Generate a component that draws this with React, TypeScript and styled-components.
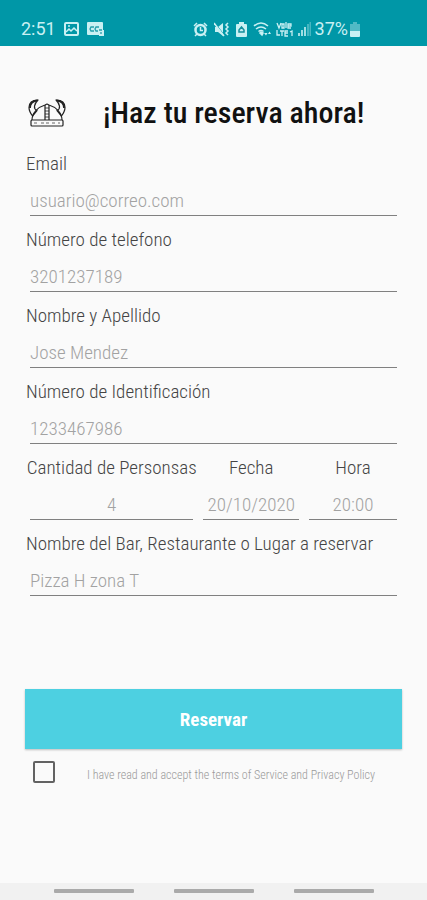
import React from "react";
import styled, { createGlobalStyle } from "styled-components";

const GlobalStyle = createGlobalStyle`
  *, *::before, *::after { box-sizing: border-box; }
  body {
    margin: 0;
    background: #fafafa;
    color: #444;
    font-family: "Roboto Condensed", Roboto, sans-serif;
  }
  input, button { font-family: inherit; }
`;

const Screen = styled.div`
  display: flex;
  flex-direction: column;
  min-height: 100vh;
  background: #fafafa;
`;

const StatusBar = styled.header`
  display: flex;
  justify-content: space-between;
  height: 46px;
  padding: 12px 67px 0 21px;
  background: #0097a7;
  color: #c9f0f3;
  font: 400 18px/34px Roboto, sans-serif;
`;

const StatusGroup = styled.div<{ $gap: number }>`
  display: flex;
  align-items: center;
  gap: ${(p) => p.$gap}px;
  height: 34px;
  svg { display: block; flex: none; }
`;

const Content = styled.main`
  display: flex;
  flex: 1;
  flex-direction: column;
  padding: 0 25px;
`;

const TitleRow = styled.div`
  display: flex;
  align-items: center;
  gap: 37px;
  height: 106px;
  padding: 28px 3px 0;
`;

const Title = styled.h1`
  margin: 0;
  color: #111;
  font-size: 30px;
  font-weight: 500;
  line-height: 36px;
  white-space: nowrap;
`;

const Form = styled.form`
  display: flex;
  flex-direction: column;
`;

const Fields = styled.div`
  display: flex;
  flex-direction: column;
  gap: 12px;
  margin-bottom: 93px;
`;

const FieldRow = styled.div`
  display: grid;
  grid-template-columns: 46fr 28fr 26fr;
`;

const FieldBox = styled.div<{ $centered?: boolean }>`
  display: flex;
  flex-direction: column;
  min-width: 0;
  text-align: ${(p) => (p.$centered ? "center" : "left")};
`;

const Label = styled.label`
  padding: 0 1px;
  font-size: 19px;
  font-weight: 300;
  line-height: 24px;
  white-space: nowrap;
`;

const TextInput = styled.input`
  height: 40px;
  min-width: 0;
  margin: 0 5px;
  padding: 10px 0 0;
  border: 0;
  border-bottom: 1px solid #808080;
  border-radius: 0;
  outline: 0;
  background: transparent;
  color: #444;
  font-size: 19px;
  font-weight: 300;
  text-align: inherit;
  &::placeholder { color: #a2a2a2; opacity: 1; }
`;

const SubmitButton = styled.button`
  height: 60px;
  border: 0;
  background: #4dd0e1;
  box-shadow: 0 1px 2px rgba(0, 0, 0, 0.25);
  color: #fff;
  font-size: 19px;
  font-weight: 700;
`;

const Terms = styled.div`
  display: flex;
  align-items: center;
  gap: 32px;
  height: 46px;
  padding: 0 8px;
`;

const Checkbox = styled.input`
  appearance: none;
  flex: none;
  width: 22px;
  height: 22px;
  margin: 0;
  border: 2px solid #626262;
  border-radius: 2px;
  &:checked { background: #0097a7; }
`;

const TermsLabel = styled.label`
  padding-top: 6px;
  color: #999;
  font-size: 12px;
  font-weight: 300;
  line-height: 16px;
  white-space: nowrap;
`;

const NavBar = styled.nav`
  display: flex;
  justify-content: center;
  gap: 40px;
  height: 17px;
  padding-top: 6px;
  background: #f1f1f1;
`;

const NavKey = styled.button`
  width: 80px;
  height: 4px;
  padding: 0;
  border: 0;
  border-radius: 1px;
  background: #aaa;
`;

type FieldProps = { id: string; label: string; placeholder: string; type?: string; centered?: boolean };

function Field({ id, label, placeholder, type = "text", centered }: FieldProps) {
  return (
    <FieldBox $centered={centered}>
      <Label htmlFor={id}>{label}</Label>
      <TextInput id={id} type={type} placeholder={placeholder} />
    </FieldBox>
  );
}

function HelmetIcon() {
  return (
    <svg width="38" height="28" viewBox="0 0 38 28" fill="none" stroke="#222" strokeWidth="1.2" strokeLinejoin="round">
      <path d="M4 21C4 14 10 8 17 6l2-1 2 1c7 2 13 8 13 15" />
      <path d="M10 1C4 1 1 4 1 8.500 1 12 3 15 4.500 17L9 11.500C5 10 6 5 10 1ZM28 1c6 0 9 3 9 7.500 0 3.500-2 6.500-3.500 8.500L29 11.500C33 10 32 5 28 1Z" />
      <path d="M9 1.500C4 2 2 5 2 9M29 1.500c5 .5 7 3.500 7 7.500" strokeWidth="1.800" />
      <path d="M17 6v15M21 6v15" />
      <path d="M17 9h4M17 12h4M17 15h4M17 18h4" strokeWidth=".8" />
      <rect x="3" y="21" width="32" height="6" rx="1" />
      <path d="M6 24h3M13 24h3M18 24h3M24 24h3M30 24h2" stroke="#666" />
    </svg>
  );
}

function PictureIcon() {
  return (
    <svg width="15" height="14" viewBox="0 0 15 14" fill="none" stroke="currentColor" strokeWidth="2">
      <rect x="1" y="1" width="13" height="12" rx="1" />
      <path d="m2 10 3-3 2 2 3-3 3 3M4 4h2" strokeWidth="1.5" />
    </svg>
  );
}

function CardIcon() {
  return (
    <svg width="18" height="14" viewBox="0 0 18 14">
      <path d="M1 0h14q1 0 1 1v7h1v6h-5v-1H1q-1 0-1-1V1q0-1 1-1Z" fill="currentColor" />
      <path d="M7 5H4L3 7l1 2h3M12 5H9L8 7l1 2h2M12 8h3M14 10v2" fill="none" stroke="#259fac" strokeWidth="1.3" />
    </svg>
  );
}

function AlarmIcon() {
  return (
    <svg width="15" height="15" viewBox="0 0 15 15" fill="none" stroke="currentColor">
      <circle cx="7.500" cy="8" r="5" strokeWidth="2.500" />
      <path d="M7.500 5v3.500H10M1 4l3-3M11 1l3 3M4 12l-2 2M11 12l2 2" strokeWidth="1.500" />
    </svg>
  );
}

function MuteIcon() {
  return (
    <svg width="16" height="15" viewBox="0 0 16 15" fill="none" stroke="currentColor">
      <path d="M1 5h3l5-4v13L4 10H1Z" fill="currentColor" stroke="none" />
      <path d="m1 1 10 13" stroke="#0097a7" strokeWidth="1" />
      <path d="m0 1 10 13" strokeWidth="1.500" />
      <path d="m14 1-2 2 2 2-2 2 2 2-2 2 2 2" strokeWidth="1.500" />
    </svg>
  );
}

function SaverIcon() {
  return (
    <svg width="11" height="15" viewBox="0 0 11 15">
      <path d="M3 0h5v2h2q1 0 1 1v11q0 1-1 1H1q-1 0-1-1V3q0-1 1-1h2Z" fill="currentColor" />
      <path d="m3 8 2.500-3L8 8v2H3Z" fill="none" stroke="#168f9c" strokeWidth="1.500" />
    </svg>
  );
}

function WifiIcon() {
  return (
    <svg width="19" height="15" viewBox="0 0 19 15" fill="none" stroke="currentColor" strokeWidth="1.600">
      <path d="M1 4q7-6 14 0M3 7q5-4 10 0M5.500 9.500q2.500-2 5 0" />
      <path d="m8 10-1 1 2 2 1-2Z" fill="currentColor" />
      <path d="m11 11 2 2.500 1.500-2.500ZM15 12l1.500-2.500L18 12Z" fill="currentColor" stroke="none" />
    </svg>
  );
}

function VolteIcon() {
  return (
    <svg width="18" height="15" viewBox="0 0 18 15" fill="none" stroke="currentColor" strokeWidth="1.300">
      <path d="m1 1 2 5 2-5M8 2H6v4h2V2ZM10 0v6M12 4h3V2h-3v4h3" />
      <path d="M1 8v5h3M4 9h4M6 9v5M12 9H9v5h3M9 11h3M14 10l2-1v5" />
    </svg>
  );
}

function SignalIcon() {
  return (
    <svg width="13" height="14" viewBox="0 0 13 14" fill="currentColor">
      <path d="M0 11h2v3H0ZM3 8h2v6H3ZM6 5h2v9H6Z" opacity=".8" />
      <path d="M9 2h2v12H9ZM11.500 0H13v14h-1.500Z" opacity=".35" />
    </svg>
  );
}

function BatteryIcon() {
  return (
    <svg width="10" height="15" viewBox="0 0 10 15" fill="currentColor">
      <path d="M3 0h4v2h3v7H0V2h3Z" opacity=".4" />
      <path d="M0 9h10v5q0 1-1 1H1q-1 0-1-1Z" />
    </svg>
  );
}

export default function App() {
  return (
    <Screen>
      <GlobalStyle />
      <StatusBar>
        <StatusGroup $gap={8}>
          <time>2:51</time>
          <PictureIcon />
          <CardIcon />
        </StatusGroup>
        <StatusGroup $gap={6}>
          <AlarmIcon />
          <MuteIcon />
          <SaverIcon />
          <StatusGroup $gap={4}>
            <WifiIcon />
            <VolteIcon />
            <SignalIcon />
            <StatusGroup $gap={2}>
              <span>37%</span>
              <BatteryIcon />
            </StatusGroup>
          </StatusGroup>
        </StatusGroup>
      </StatusBar>
      <Content>
        <TitleRow>
          <HelmetIcon />
          <Title>¡Haz tu reserva ahora!</Title>
        </TitleRow>
        <Form onSubmit={(e) => e.preventDefault()}>
          <Fields>
            <Field id="email" type="email" label="Email" placeholder="usuario@correo.com" />
            <Field id="phone" type="tel" label="Número de telefono" placeholder="3201237189" />
            <Field id="name" label="Nombre y Apellido" placeholder="Jose Mendez" />
            <Field id="identification" label="Número de Identificación" placeholder="1233467986" />
            <FieldRow>
              <Field id="people" label="Cantidad de Personsas" placeholder="4" centered />
              <Field id="date" label="Fecha" placeholder="20/10/2020" centered />
              <Field id="time" label="Hora" placeholder="20:00" centered />
            </FieldRow>
            <Field id="place" label="Nombre del Bar, Restaurante o Lugar a reservar" placeholder="Pizza H zona T" />
          </Fields>
          <SubmitButton type="submit">Reservar</SubmitButton>
          <Terms>
            <Checkbox id="terms" type="checkbox" />
            <TermsLabel htmlFor="terms">I have read and accept the terms of Service and Privacy Policy</TermsLabel>
          </Terms>
        </Form>
      </Content>
      <NavBar aria-label="Sistema">
        <NavKey type="button" aria-label="Recientes" />
        <NavKey type="button" aria-label="Inicio" />
        <NavKey type="button" aria-label="Atrás" />
      </NavBar>
    </Screen>
  );
}
